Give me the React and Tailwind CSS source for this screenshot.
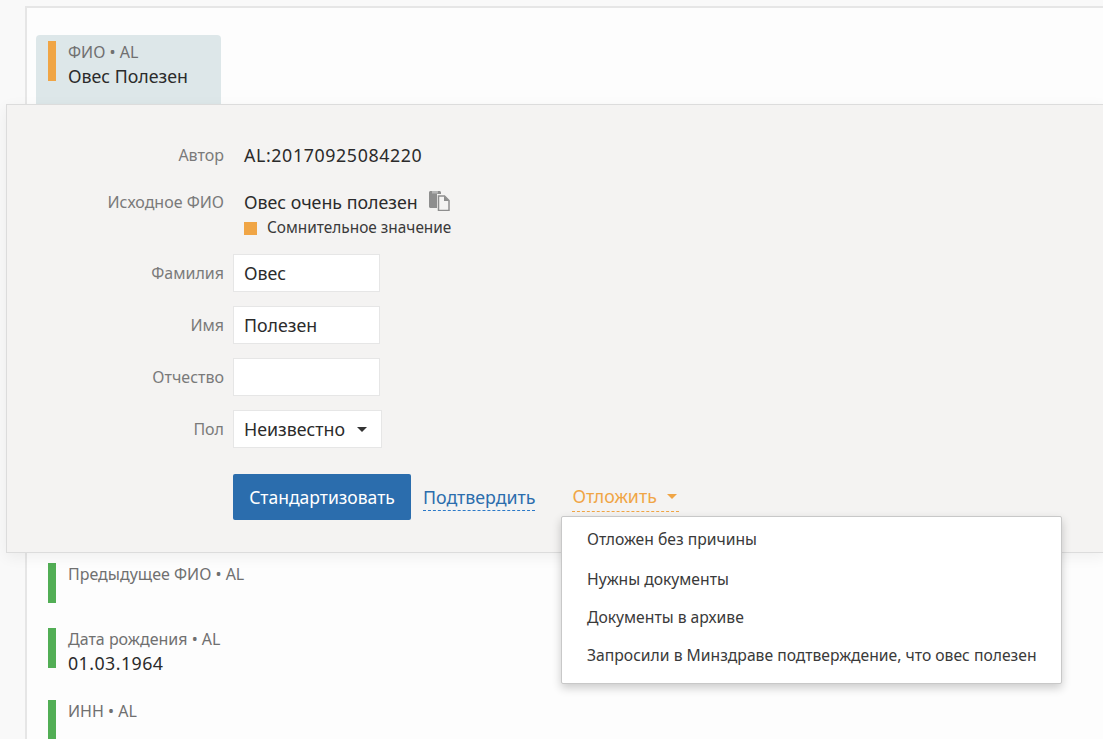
import React from "react";

function Field({ label, value, color }) {
  return (
    <div className="flex h-10 gap-3">
      <div className={`w-2 h-10 shrink-0 ${color}`} />
      <div className="-mt-[1px]">
        <div className="text-[16px] leading-[24px] text-[#707070]">{label}</div>
        {value && <div className="text-[17.8px] leading-[24px] tracking-[0.45px] text-[#2b2b2b]">{value}</div>}
      </div>
    </div>
  );
}

function FormRow({ label, children }) {
  return (
    <div className="flex items-center h-[38px] mb-[14px]">
      <div className="w-[226px] pr-[9px] text-right text-[16px] text-[#7a7a7a] shrink-0">{label}</div>
      {children}
    </div>
  );
}

function TextBox({ value }) {
  return (
    <div className="w-[147px] h-[38px] bg-white border border-[#e6e6e6] px-[10px] flex items-center text-[17.8px] text-[#2b2b2b]">
      {value}
    </div>
  );
}

function Caret({ className }) {
  return (
    <span className={`inline-block w-0 h-0 border-x-[5px] border-x-transparent border-t-[5px] ${className}`} />
  );
}

const menu = [
  ["Отложен без причины", "h-[40px]"],
  ["Нужны документы", "h-[39px]"],
  ["Документы в архиве", "h-[38px]"],
  ["Запросили в Минздраве подтверждение, что овес полезен", "h-[38px]"],
];

export default function App() {
  return (
    <div className="h-[739px] w-[1103px] overflow-hidden bg-[#f9f9f9] pl-[25px] pt-[6px] font-['Noto_Sans',sans-serif]">
      <div className="h-[760px] border-l-2 border-t-2 border-[#e6e6e6] bg-[#fdfdfd] pl-[9px] pt-[27px]">
        <div className="w-[185px] h-[69px] rounded-t-[4px] bg-[#dde7e9] pl-3 pt-[6px] flex gap-3">
          <div className="w-2 h-10 bg-[#f0a545] shrink-0" />
          <div className="-mt-[1px]">
            <div className="text-[16px] leading-[24px] text-[#707070]">ФИО • AL</div>
            <div className="text-[17.8px] leading-[24px] text-[#2b2b2b]">Овес Полезен</div>
          </div>
        </div>

        <div className="relative z-10 -ml-[30px] w-[1100px] h-[449px] bg-[#f4f3f2] border border-[#dcdcdc] shadow-[0_4px_14px_rgba(0,0,0,0.06)] pt-[38px]">
          <div className="flex items-center h-6 mb-[23px]">
            <div className="w-[217px] text-right text-[16px] text-[#7a7a7a] shrink-0">Автор</div>
            <div className="ml-[20px] text-[17.8px] tracking-[0.62px] text-[#2b2b2b]">AL:20170925084220</div>
          </div>
          <div className="flex items-center h-6">
            <div className="w-[217px] text-right text-[16px] text-[#7a7a7a] shrink-0">Исходное ФИО</div>
            <div className="ml-[20px] text-[17.8px] text-[#2b2b2b]">Овес очень полезен</div>
            <svg className="ml-[11px] -mt-[2px]" width="21" height="20" viewBox="0 0 21 20">
              <path d="M0 1.5C0 .7.7 0 1.5 0h9c.8 0 1.5.7 1.5 1.5V3H8v14H1.500C.7 17 0 16.300 0 15.500Z" fill="#8e8e8e" />
              <path d="M9.500 5h6l4.500 4.500V19.500h-10.500Z" fill="#f4f3f2" stroke="#8e8e8e" strokeWidth="1.500" />
              <path d="M15 5v5h5" fill="#8e8e8e" />
              <rect x="3" y="0" width="6" height="2.500" fill="#b5b5b5" />
            </svg>
          </div>
          <div className="flex items-center h-5 mt-[4px] mb-[16px] pl-[237px]">
            <div className="w-[13px] h-[13px] bg-[#f0a545]" />
            <div className="ml-[10px] text-[15.4px] text-[#3a3a3a]">Сомнительное значение</div>
          </div>

          <FormRow label="Фамилия"><TextBox value="Овес" /></FormRow>
          <FormRow label="Имя"><TextBox value="Полезен" /></FormRow>
          <FormRow label="Отчество"><TextBox value="" /></FormRow>
          <FormRow label="Пол">
            <div className="w-[149px] h-[38px] bg-white border border-[#e6e6e6] px-[10px] flex items-center justify-between text-[17.8px] text-[#2b2b2b]">
              Неизвестно
              <Caret className="border-t-[#333333] mr-[4px]" />
            </div>
          </FormRow>

          <div className="flex items-start mt-[26px] pl-[226px] relative">
            <button className="w-[178px] h-[46px] rounded-[2px] bg-[#2b6dad] text-white text-[17.5px]">Стандартизовать</button>
            <a className="ml-[12px] mt-[11px] h-[26px] leading-[24px] border-b border-dashed border-b-[#2a78c8] text-[#2b6dad] text-[17.8px]">Подтвердить</a>
            <a className="ml-[37px] mt-[10px] h-[28px] pb-[3px] leading-[24px] border-b border-dashed border-b-[#f0a545] text-[#f0a545] text-[17.8px] flex items-center w-[107px] gap-[10px]">
              Отложить
              <Caret className="border-t-[#f0a545]" />
            </a>
            <div className="absolute z-20 left-[554px] top-[42px] w-[501px] h-[168px] bg-white border border-[#c8c8c8] rounded-[2px] shadow-[0_4px_10px_rgba(0,0,0,0.2)] pl-[25px] pt-[3px]">
              {menu.map(([t, h]) => (
                <div key={t} className={`${h} flex items-center text-[15.7px] text-[#3a3a3a]`}>{t}</div>
              ))}
            </div>
          </div>
        </div>

        <div className="pl-[12px] pt-[10px] flex flex-col">
          <div className="mb-[25px]"><Field label="Предыдущее ФИО • AL" color="bg-[#52ae55]" /></div>
          <div className="mb-[32px]"><Field label="Дата рождения • AL" value="01.03.1964" color="bg-[#52ae55]" /></div>
          <Field label="ИНН • AL" color="bg-[#52ae55]" />
        </div>
      </div>
    </div>
  );
}
